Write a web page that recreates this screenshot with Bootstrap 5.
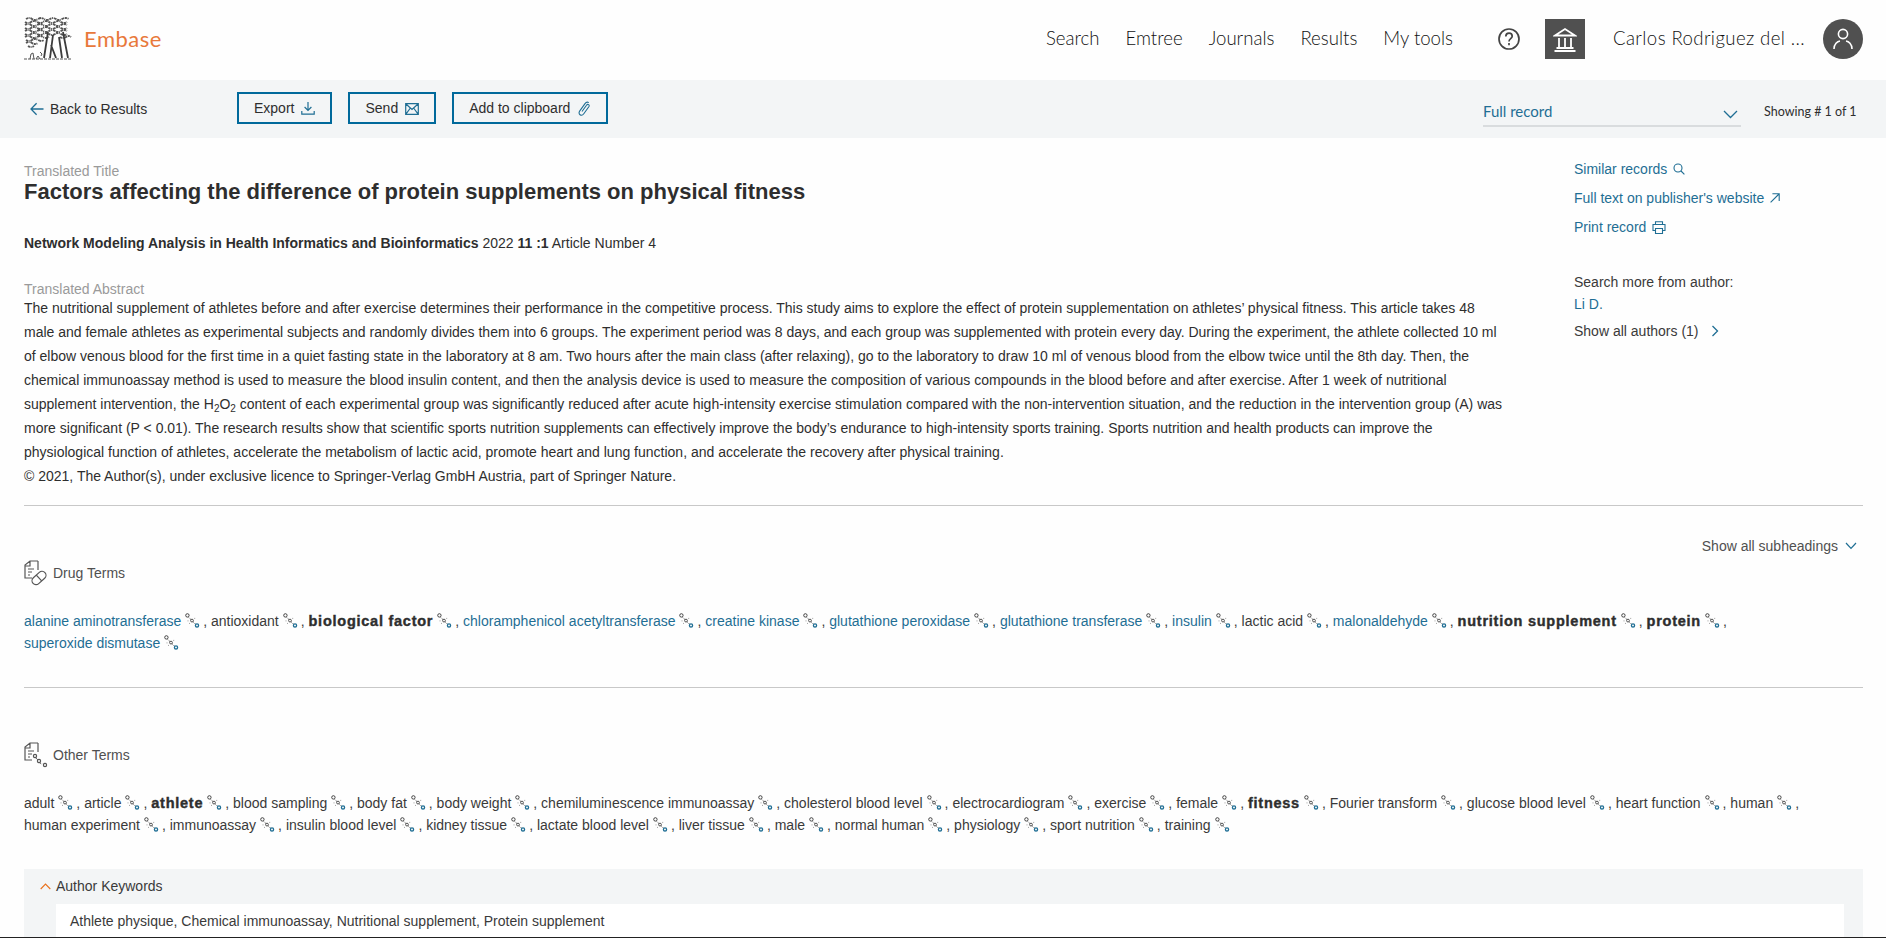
<!DOCTYPE html>
<html lang="en">
<head>
  <meta charset="UTF-8" />
  <title>Embase - Full record</title>
  <meta name="viewport" content="width=device-width, initial-scale=1" />
  <link href="https://cdn.jsdelivr.net/npm/bootstrap@5.3.0/dist/css/bootstrap.min.css" rel="stylesheet" />
  <style>
    html, body { height: 100%; overflow: hidden; }
    body { font-family: "Liberation Sans", Arial, sans-serif; font-size: 14px; color: #2e2e2e; background: #fefefe; }
    a { color: #1f6e94; text-decoration: none; }
    svg { flex: none; }
    .emb-page { height: 937px; overflow: hidden; }
    .emb-endline { height: 1px; background: #222; }

    .emb-head { height: 80px; padding: 0 23px 2px 24px; }
    .emb-brand { color: #e8783a; font-family: Lato, sans-serif; font-size: 22px; letter-spacing: .5px; padding: 0 0 2px; margin: 0 0 0 12px; }
    .emb-tree { width: 48px; height: 44px; }
    .emb-menu { font-family: Lato, sans-serif; font-size: 18.6px; font-weight: 300; gap: 26px; }
    .emb-menu a { color: #111; padding: 0; }
    .emb-help { margin-left: 44px; }
    .emb-inst { width: 40px; height: 40px; background: #505050; margin-left: 24px; }
    .emb-user { font-family: Lato, sans-serif; font-size: 18.6px; font-weight: 300; letter-spacing: .4px; color: #111; width: 210px; margin-left: 28px; white-space: nowrap; }
    .emb-avatar { width: 40px; height: 40px; background: #505050; border-radius: 50%; }

    .emb-tools { height: 58px; background: #f3f5f6; padding: 0 30px; }
    .emb-back { color: #2e2e2e; width: 207px; gap: 6px; }
    .emb-btn { height: 32px; padding: 2px 15px 0; margin-bottom: 3px; border: 2px solid #00699b; border-radius: 0; background: transparent; color: #2e2e2e; font-size: 14px; gap: 7px; }
    .emb-btn:hover { border-color: #00699b; }
    .emb-select { width: 258px; height: 29px; margin-left: auto; margin-top: 7px; border-bottom: 2px solid #d9dcde; color: #1f6e94; font-family: Lato, sans-serif; font-size: 15px; padding-right: 3px; }
    .emb-select svg { margin-top: 6px; }
    .emb-count { font-family: Lato, sans-serif; font-size: 12.5px; margin-left: 23px; margin-top: 6px; width: 92px; white-space: nowrap; }

    .emb-body { padding: 20px 23px 0 24px; }
    .emb-main { width: 1482px; padding-top: 5px; }
    .emb-side { padding: 1px 0 0 68px; line-height: 20px; }
    .emb-side a { display: flex; align-items: center; gap: 6px; }
    .emb-side .emb-sidelink { margin-bottom: 9px; height: 20px; }
    .emb-side p { margin: 0; }
    .emb-side .emb-authhead { margin-top: 35px; margin-bottom: 2px; color: #3a3a3a; }
    .emb-side .emb-allauth { margin-top: 7px; color: #3a3a3a; gap: 12px; }
    .emb-label { color: #9a9a9a; line-height: 16px; }
    .emb-title { font-size: 22px; font-weight: 700; line-height: 26px; margin: 0; color: #2e2e2e; }
    .emb-journal { margin: 28px 0 28px; line-height: 20px; }
    .emb-abstract { line-height: 24px; margin: -1px 0 0; }
    .emb-abstract sub { font-size: 10px; }
    .emb-rule { margin: 0; border: 0; border-top: 1px solid #c8c8c8; opacity: 1; }
    .emb-rule1 { margin-top: 17px; }
    .emb-rule2 { margin-top: 33px; }
    .emb-subs { color: #505050; gap: 7px; height: 20px; margin-top: 30px; padding-right: 6px; }
    .emb-termhead { color: #505050; gap: 5px; height: 26px; }
    .emb-drughead { margin-top: 4px; }
    .emb-otherhead { margin-top: 54px; }
    .emb-terms { line-height: 22px; margin: 24px 0 0; font-size: 14px; color: #3a3a3a; }
    .emb-terms b { font-size: 14.5px; letter-spacing: .75px; font-weight: 700; color: #2e2e2e; -webkit-text-stroke: .4px #2e2e2e; }
    .emb-dot { width: 15px; height: 15px; vertical-align: -2px; margin: 0 3px 0 4px; }
    .emb-kw { background: #f3f5f6; padding: 4px 19px 0 32px; height: 68px; margin-top: 33px; }
    .emb-kwhead { height: 26px; gap: 5px; margin: 0 0 5px -16px; color: #3a3a3a; }
    .emb-kwbody { background: #fff; padding: 8px 14px 6px; height: 33px; line-height: 19px; color: #3a3a3a; }
  </style>
</head>
<body>
<svg width="0" height="0" class="position-absolute">
  <symbol id="term-dots" viewBox="0 0 15 15">
    <circle cx="2.4" cy="2.4" r="1.7" fill="none" stroke="#333" stroke-width=".9"/>
    <path d="M3.600 4.400 6 6.600M8.200 8.800l2.200 2.200" stroke="#333" stroke-width=".9" stroke-dasharray="1 1"/>
    <circle cx="7" cy="7.600" r="1.400" fill="none" stroke="#444" stroke-width=".9"/>
    <path d="M3 7.400v1.400M4 10.400h1.400M9.200 5.400h1" stroke="#777" stroke-width=".7" stroke-dasharray="1 1"/>
    <circle cx="12" cy="12.400" r="1.600" fill="none" stroke="#1f6e94" stroke-width="1.300"/>
  </symbol>
</svg>
<div class="emb-page">
  <header class="emb-head d-flex align-items-center">
    <a class="d-flex align-items-center" href="#">
      <svg class="emb-tree" viewBox="0 0 48 44" fill="none" stroke="#555">
        <path d="M2 2q3-2 6 0t6 0 6 0 6 0 6 0 6 0 7 0M1 5q3 2 6 0t6 0 6 0 6 0 6 0 6 0 6 0M1 8q3-2 6 0t6 0 6 0 6 0 6 0 6 0 6 0M1 11q3 2 6 0t6 0 6 0 6 0 6 0 6 0 6 0M1 14q3-2 6 0t6 0 6 0 6 0 6 0 6 0 6 0M1 17q3 2 6 0t6 0 6 0 6 0 6 0 6 0 6 0M1 20q3-2 6 0t6 0 6 0 6 0M36 20q3 2 6 0t5 0M2 23q3 2 6 0t6 0 6 0M2 26q3-2 6 0t6 0M4 29q3 2 6 0" stroke-width="1.800" stroke-dasharray="2.200 .6 1 .8 3 .6"/>
        <path d="M24 15 20 41M39 15l5 26M29 18l-3 23M35 20l3 21M27 28l5 13" stroke="#3c3c3c" stroke-width="1.800"/>
        <path d="M0 42h48" stroke="#555" stroke-width="1" stroke-dasharray="3 1"/>
        <path d="M6 42l1-5 2-1 1 6M12 42l2-3 2 3M16 35l2 2-1 2" stroke="#555" stroke-width="1"/>
      </svg>
      <span class="navbar-brand emb-brand">Embase</span>
    </a>
    <nav class="nav emb-menu ms-auto align-items-center">
      <a class="nav-link" href="#">Search</a>
      <a class="nav-link" href="#">Emtree</a>
      <a class="nav-link" href="#">Journals</a>
      <a class="nav-link" href="#">Results</a>
      <a class="nav-link" href="#">My tools</a>
    </nav>
    <svg class="emb-help" width="24" height="24" viewBox="0 0 24 24" fill="none" stroke="#444" stroke-width="1.700"><circle cx="12" cy="12" r="10"/><path d="M8.800 9.600c0-2.100 1.400-3.400 3.200-3.400s3.200 1.200 3.200 3c0 2.400-3.200 2.600-3.200 5.200"/><path d="M12 16v2.200"/></svg>
    <div class="emb-inst d-flex align-items-center justify-content-center">
      <svg width="24" height="25" viewBox="0 0 24 25" fill="none" stroke="#fff" stroke-width="1.800"><path d="M2 8.500 12 2l10 6.500zM6 11v9M12 11v9M18 11v9M3.500 21h17M1.500 24h21"/></svg>
    </div>
    <div class="emb-user">Carlos Rodriguez del ...</div>
    <div class="emb-avatar d-flex align-items-center justify-content-center">
      <svg width="24" height="26" viewBox="0 0 24 26" fill="none" stroke="#fff" stroke-width="1.600"><circle cx="12" cy="8" r="4.600"/><path d="M3 23c0-5 3.400-7.600 6-8M21 23c0-5-3.400-7.600-6-8"/></svg>
    </div>
  </header>

  <div class="emb-tools d-flex align-items-center">
    <a href="#" class="emb-back d-flex align-items-center">
      <svg width="14" height="14" viewBox="0 0 14 14" fill="none" stroke="#1f6e94" stroke-width="1.300"><path d="M13.500 7H1M6.600 1.200 1 7l5.600 5.800"/></svg>
      Back to Results
    </a>
    <button class="btn emb-btn d-inline-flex align-items-center" type="button">Export
      <svg width="14" height="13" viewBox="0 0 14 13" fill="none" stroke="#1f6e94" stroke-width="1.200"><path d="M7 0v8M3.600 5 7 8.400 10.400 5M.8 9v3.200h12.400V9"/></svg>
    </button>
    <button class="btn emb-btn d-inline-flex align-items-center ms-3" type="button">Send
      <svg width="14" height="12" viewBox="0 0 14 12" fill="none" stroke="#1f6e94" stroke-width="1.200"><path d="M.7.700h12.600v10.600H.7zM.7.700 7 6.500 13.300.7M.7 11.300 5.400 5M13.300 11.300 8.600 5"/></svg>
    </button>
    <button class="btn emb-btn d-inline-flex align-items-center ms-3" type="button">Add to clipboard
      <svg width="14" height="15" viewBox="0 0 14 15" fill="none" stroke="#1f6e94" stroke-width="1.100"><path d="M5 10.500 9.500 4.200c.6-.9 1.500-1 2.100-.6s.8 1.300.2 2.200l-5 7c-1.100 1.500-2.700 1.700-3.800.9S1.700 11.400 2.800 9.900l5.200-7.300C9 1.200 10.500.8 11.800 1.600"/></svg>
    </button>
    <div class="emb-select d-flex align-items-center justify-content-between">
      <span>Full record</span>
      <svg width="15" height="9" viewBox="0 0 15 9" fill="none" stroke="#1f6e94" stroke-width="1.300"><path d="m1 1 6.500 6.500L14 1"/></svg>
    </div>
    <div class="emb-count">Showing # 1 of 1</div>
  </div>

  <main class="emb-body">
    <div class="d-flex">
      <div class="emb-main">
        <div class="emb-label">Translated Title</div>
        <h1 class="emb-title">Factors affecting the difference of protein supplements on physical fitness</h1>
        <p class="emb-journal"><strong>Network Modeling Analysis in Health Informatics and Bioinformatics</strong> 2022 <strong>11 :1</strong> Article Number 4</p>
        <div class="emb-label">Translated Abstract</div>
        <p class="emb-abstract">The nutritional supplement of athletes before and after exercise determines their performance in the competitive process. This study aims to explore the effect of protein supplementation on athletes’ physical fitness. This article takes 48 male and female athletes as experimental subjects and randomly divides them into 6 groups. The experiment period was 8 days, and each group was supplemented with protein every day. During the experiment, the athlete collected 10 ml of elbow venous blood for the first time in a quiet fasting state in the laboratory at 8 am. Two hours after the main class (after relaxing), go to the laboratory to draw 10 ml of venous blood from the elbow twice until the 8th day. Then, the chemical immunoassay method is used to measure the blood insulin content, and then the analysis device is used to measure the composition of various compounds in the blood before and after exercise. After 1 week of nutritional supplement intervention, the H<sub>2</sub>O<sub>2</sub> content of each experimental group was significantly reduced after acute high-intensity exercise stimulation compared with the non-intervention situation, and the reduction in the intervention group (A) was more significant (P &lt; 0.01). The research results show that scientific sports nutrition supplements can effectively improve the body’s endurance to high-intensity sports training. Sports nutrition and health products can improve the physiological function of athletes, accelerate the metabolism of lactic acid, promote heart and lung function, and accelerate the recovery after physical training.<br>© 2021, The Author(s), under exclusive licence to Springer-Verlag GmbH Austria, part of Springer Nature.</p>
      </div>
      <aside class="emb-side">
        <a class="emb-sidelink" href="#">Similar records
          <svg width="12" height="12" viewBox="0 0 12 12" fill="none" stroke="#1f6e94" stroke-width="1.100"><circle cx="5" cy="5" r="4"/><path d="m8 8 3.400 3.400"/></svg>
        </a>
        <a class="emb-sidelink" href="#">Full text on publisher's website
          <svg width="10" height="10" viewBox="0 0 10 10" fill="none" stroke="#1f6e94" stroke-width="1.100"><path d="M.6 9.400 9 1M2.400.8h6.800V8"/></svg>
        </a>
        <a class="emb-sidelink" href="#">Print record
          <svg width="14" height="13" viewBox="0 0 14 13" fill="none" stroke="#1f6e94" stroke-width="1.100"><path d="M3.500 3.500V.7h7v2.800M3.500 9.500H1V3.500h12v6h-2.500M3.500 7.500h7v5h-7z"/></svg>
        </a>
        <p class="emb-authhead">Search more from author:</p>
        <a href="#">Li D.</a>
        <p class="emb-allauth d-flex align-items-center">Show all authors (1)
          <svg width="8" height="12" viewBox="0 0 8 12" fill="none" stroke="#1f6e94" stroke-width="1.300"><path d="m1.500 1 5 5-5 5"/></svg>
        </p>
      </aside>
    </div>

    <hr class="emb-rule emb-rule1">
    <div class="emb-subs d-flex justify-content-end align-items-center">Show all subheadings
      <svg width="12" height="8" viewBox="0 0 12 8" fill="none" stroke="#1f6e94" stroke-width="1.200"><path d="m1 1 5 5.400L11 1"/></svg>
    </div>
    <div class="emb-termhead d-flex align-items-center emb-drughead">
      <svg width="24" height="26" viewBox="0 0 24 26" fill="none" stroke="#555" stroke-width="1.200"><path d="M14 1H6L1 5v13h7M14 1v9M6 1v5H1M4 9h6M4 12h4M4 15h2"/><g transform="rotate(-42 15 18)"><rect x="7" y="14" width="16" height="8" rx="4"/><path d="M15 14v8"/></g></svg>
      Drug Terms
    </div>
    <p class="emb-terms"><a href="#">alanine aminotransferase</a><svg class="emb-dot"><use href="#term-dots"/></svg>, antioxidant<svg class="emb-dot"><use href="#term-dots"/></svg>, <b>biological factor</b><svg class="emb-dot"><use href="#term-dots"/></svg>, <a href="#">chloramphenicol acetyltransferase</a><svg class="emb-dot"><use href="#term-dots"/></svg>, <a href="#">creatine kinase</a><svg class="emb-dot"><use href="#term-dots"/></svg>, <a href="#">glutathione peroxidase</a><svg class="emb-dot"><use href="#term-dots"/></svg>, <a href="#">glutathione transferase</a><svg class="emb-dot"><use href="#term-dots"/></svg>, <a href="#">insulin</a><svg class="emb-dot"><use href="#term-dots"/></svg>, lactic acid<svg class="emb-dot"><use href="#term-dots"/></svg>, <a href="#">malonaldehyde</a><svg class="emb-dot"><use href="#term-dots"/></svg>, <b>nutrition supplement</b><svg class="emb-dot"><use href="#term-dots"/></svg>, <b>protein</b><svg class="emb-dot"><use href="#term-dots"/></svg>,<br><a href="#">superoxide dismutase</a><svg class="emb-dot"><use href="#term-dots"/></svg></p>
    <hr class="emb-rule emb-rule2">
    <div class="emb-termhead d-flex align-items-center emb-otherhead">
      <svg width="24" height="26" viewBox="0 0 24 26" fill="none" stroke="#555" stroke-width="1.200"><path d="M14 1H6L1 5v13h7M14 1v9M6 1v5H1M4 9h6M4 12h4M4 15h2"/><circle cx="11" cy="14" r="1.600"/><path d="M12 16l2 2" stroke-dasharray="1 1"/><circle cx="15" cy="19" r="1.600"/><path d="M16 21l2 1" stroke-dasharray="1 1"/><circle cx="21" cy="23" r="1.600"/></svg>
      Other Terms
    </div>
    <p class="emb-terms">adult<svg class="emb-dot"><use href="#term-dots"/></svg>, article<svg class="emb-dot"><use href="#term-dots"/></svg>, <b>athlete</b><svg class="emb-dot"><use href="#term-dots"/></svg>, blood sampling<svg class="emb-dot"><use href="#term-dots"/></svg>, body fat<svg class="emb-dot"><use href="#term-dots"/></svg>, body weight<svg class="emb-dot"><use href="#term-dots"/></svg>, chemiluminescence immunoassay<svg class="emb-dot"><use href="#term-dots"/></svg>, cholesterol blood level<svg class="emb-dot"><use href="#term-dots"/></svg>, electrocardiogram<svg class="emb-dot"><use href="#term-dots"/></svg>, exercise<svg class="emb-dot"><use href="#term-dots"/></svg>, female<svg class="emb-dot"><use href="#term-dots"/></svg>, <b>fitness</b><svg class="emb-dot"><use href="#term-dots"/></svg>, Fourier transform<svg class="emb-dot"><use href="#term-dots"/></svg>, glucose blood level<svg class="emb-dot"><use href="#term-dots"/></svg>, heart function<svg class="emb-dot"><use href="#term-dots"/></svg>, human<svg class="emb-dot"><use href="#term-dots"/></svg>,<br>human experiment<svg class="emb-dot"><use href="#term-dots"/></svg>, immunoassay<svg class="emb-dot"><use href="#term-dots"/></svg>, insulin blood level<svg class="emb-dot"><use href="#term-dots"/></svg>, kidney tissue<svg class="emb-dot"><use href="#term-dots"/></svg>, lactate blood level<svg class="emb-dot"><use href="#term-dots"/></svg>, liver tissue<svg class="emb-dot"><use href="#term-dots"/></svg>, male<svg class="emb-dot"><use href="#term-dots"/></svg>, normal human<svg class="emb-dot"><use href="#term-dots"/></svg>, physiology<svg class="emb-dot"><use href="#term-dots"/></svg>, sport nutrition<svg class="emb-dot"><use href="#term-dots"/></svg>, training<svg class="emb-dot"><use href="#term-dots"/></svg></p>
    <section class="emb-kw">
      <div class="emb-kwhead d-flex align-items-center">
        <svg width="11" height="7" viewBox="0 0 11 7" fill="none" stroke="#e9711c" stroke-width="1.100"><path d="m.7 6 4.800-5 4.800 5"/></svg>
        Author Keywords
      </div>
      <div class="emb-kwbody">Athlete physique, Chemical immunoassay, Nutritional supplement, Protein supplement</div>
    </section>
  </main>
</div>
<div class="emb-endline"></div>
<script src="https://cdn.jsdelivr.net/npm/bootstrap@5.3.0/dist/js/bootstrap.bundle.min.js"></script>
</body>
</html>
